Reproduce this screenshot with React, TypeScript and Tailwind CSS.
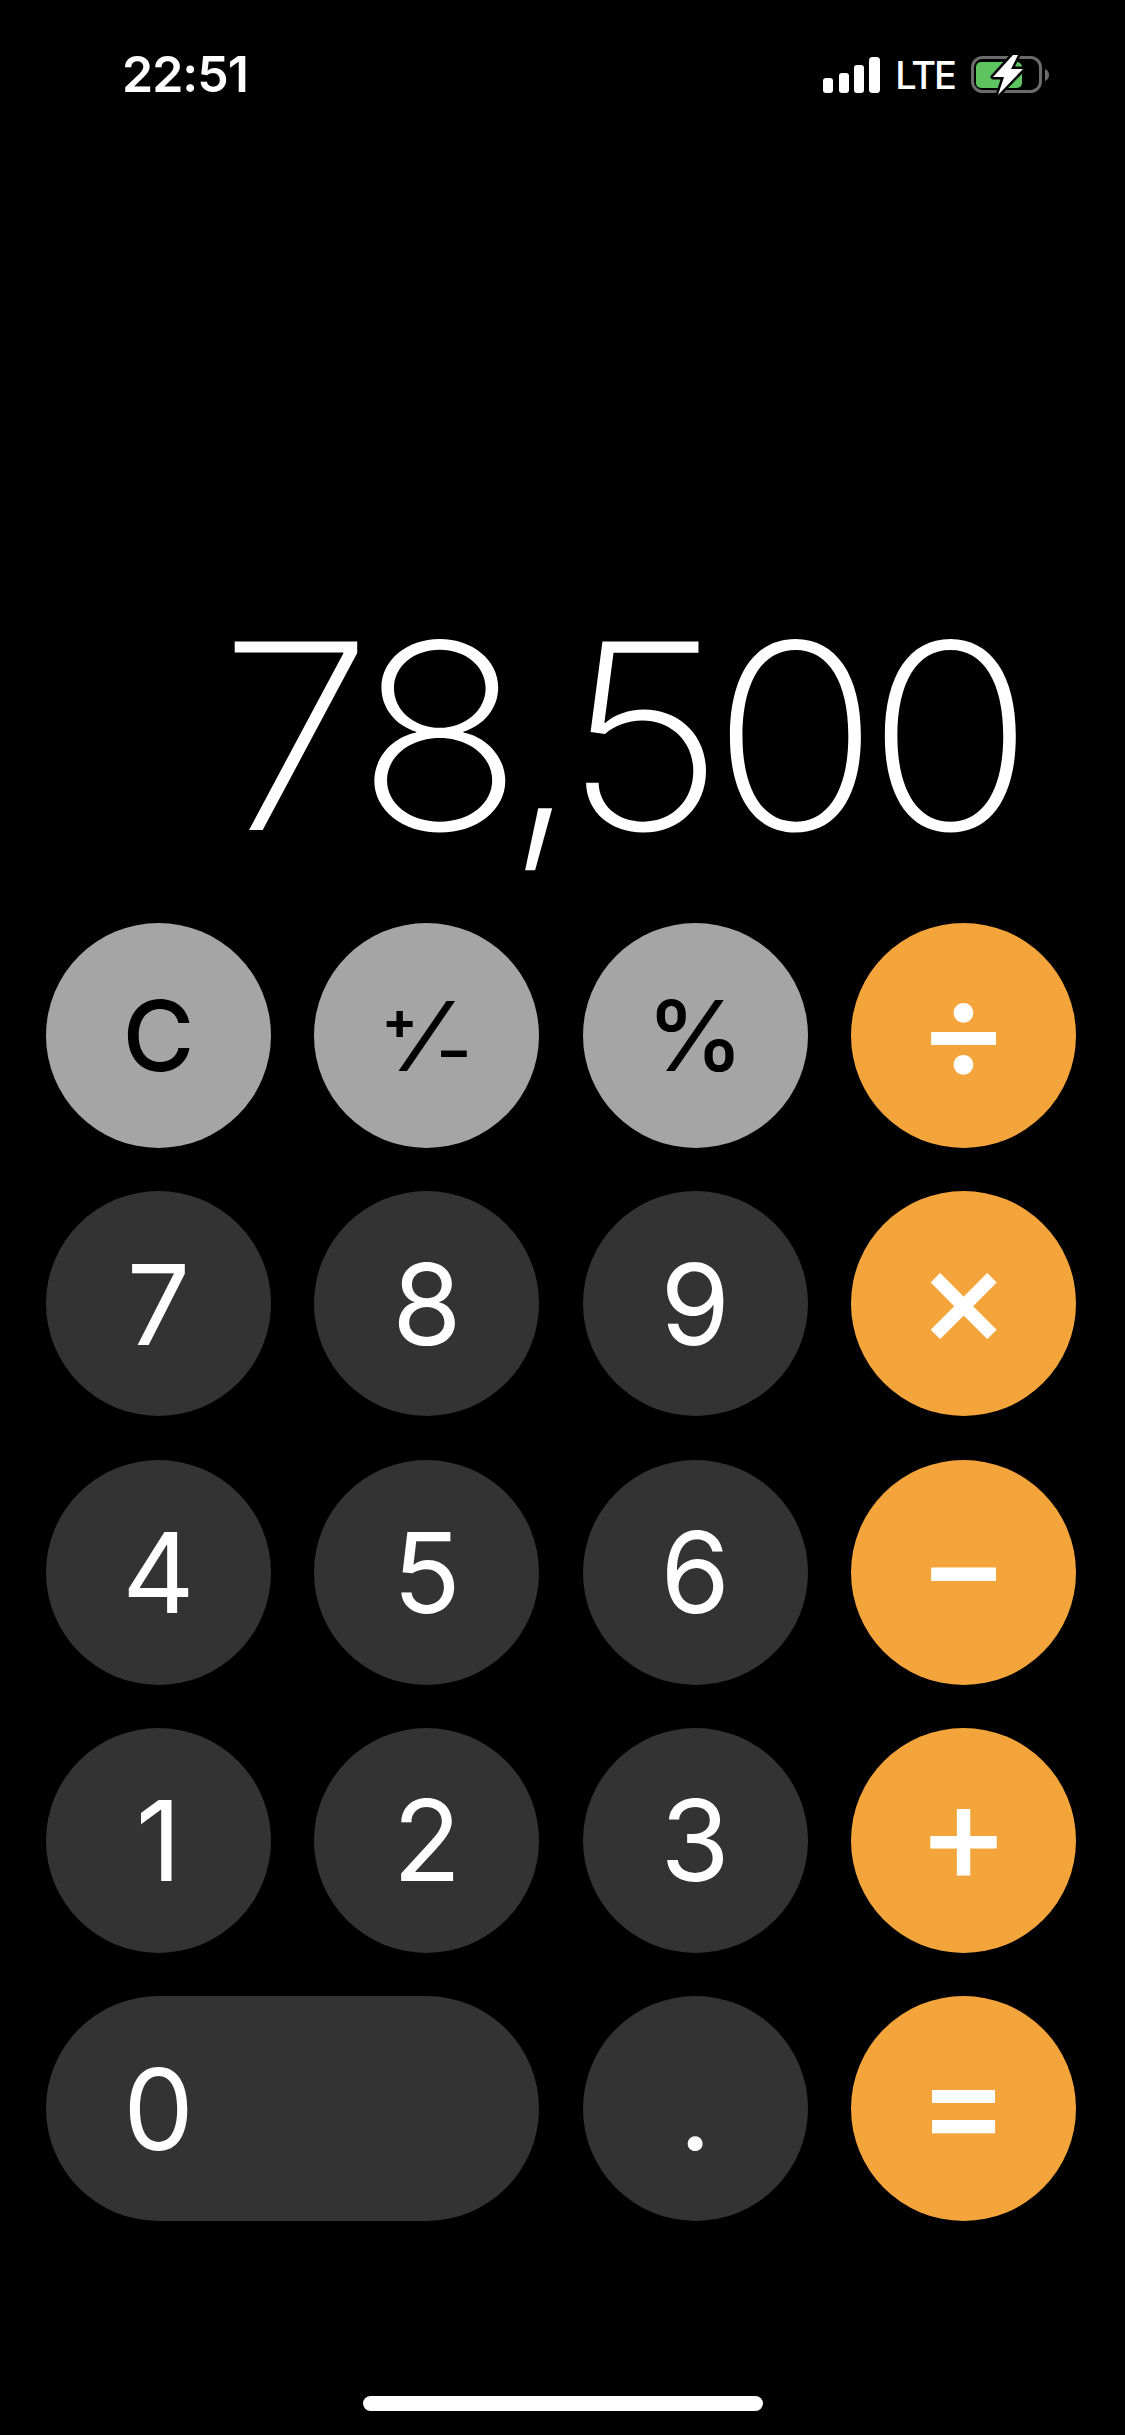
const FONT = "font-['Inter','Liberation_Sans',sans-serif]";

function SignalBars() {
  return (
    <svg width="57" height="36" viewBox="0 0 57 36" fill="#fff">
      <rect x="0" y="21" width="10" height="15" rx="3" />
      <rect x="16" y="16" width="10" height="20" rx="3" />
      <rect x="31" y="8" width="10" height="28" rx="3" />
      <rect x="46" y="0" width="11" height="36" rx="3.5" />
    </svg>
  );
}

function Battery() {
  return (
    <svg width="79" height="42" viewBox="0 0 79 42">
      <rect x="2.5" y="3.5" width="68" height="34" rx="10" fill="none" stroke="#6b6b6b" strokeWidth="3" />
      <rect x="6" y="8" width="46" height="26" rx="5" fill="#5ec45f" />
      <path d="M75 15 c2.5 1 4 3 4 6 s-1.5 5 -4 6 z" fill="#6b6b6b" />
      <path
        d="M43 1 L23 23 L34 23 L28 41 L53 15 L41 15 L48 1 Z"
        fill="#fff"
        stroke="#000"
        strokeWidth="5"
        strokeLinejoin="round"
        paintOrder="stroke"
      />
    </svg>
  );
}

function Key({
  label,
  kind = "num",
  wide = false,
}: {
  label: React.ReactNode;
  kind?: "fn" | "num" | "op";
  wide?: boolean;
}) {
  const colors =
    kind === "fn"
      ? "bg-[#a5a5a5] text-black text-[98px] font-medium"
      : kind === "op"
      ? "bg-[#f3a53c] text-white text-[138px] font-medium"
      : "bg-[#333333] text-white text-[112px] font-normal";
  return (
    <div className={`h-[225px] rounded-full flex items-center leading-none ${colors} ${wide ? "col-span-2" : ""}`}>
      <div className={`w-[225px] flex items-center justify-center ${kind === "op" ? "pb-[16px]" : ""}`}>{label}</div>
    </div>
  );
}

function PlusMinus() {
  return (
    <div className="flex h-[70px] items-stretch text-[52px] font-bold leading-[40px]">
      <span className="self-start">+</span>
      <span className="text-[96px] font-medium leading-[70px]">⁄</span>
      <span className="self-end">−</span>
    </div>
  );
}

export default function App() {
  return (
    <div className={`w-[1125px] h-[2435px] bg-black flex flex-col ${FONT}`}>
      <div className="h-[150px] pl-[122px] pr-[76px] pt-[44px] flex justify-between items-start">
        <div className="text-white text-[50px] font-semibold leading-[60px] tracking-[-1px]">22:51</div>
        <div className="flex items-center gap-[15px] pt-[10px]">
          <SignalBars />
          <div className="text-white text-[38px] font-medium leading-[40px] tracking-[-2px]">LTE</div>
          <Battery />
        </div>
      </div>

      <div className="h-[773px] flex justify-end items-end pr-[104px]">
        <div className="text-white text-[259px] font-extralight leading-none pb-[58px] tracking-[-13px] scale-x-[1.08] origin-right">
          78,500
        </div>
      </div>

      <div className="grid grid-cols-[225px_225px_225px_225px] gap-[43.33px] pl-[46px]">
        <Key kind="fn" label="C" />
        <Key kind="fn" label={<PlusMinus />} />
        <Key kind="fn" label="%" />
        <Key kind="op" label="÷" />
        <Key label="7" />
        <Key label="8" />
        <Key label="9" />
        <Key kind="op" label="×" />
        <Key label="4" />
        <Key label="5" />
        <Key label="6" />
        <Key kind="op" label="−" />
        <Key label="1" />
        <Key label="2" />
        <Key label="3" />
        <Key kind="op" label="+" />
        <Key wide label="0" />
        <Key label="." />
        <Key kind="op" label="=" />
      </div>

      <div className="flex justify-center pt-[175px]">
        <div className="w-[400px] h-[15px] rounded-full bg-white" />
      </div>
    </div>
  );
}
